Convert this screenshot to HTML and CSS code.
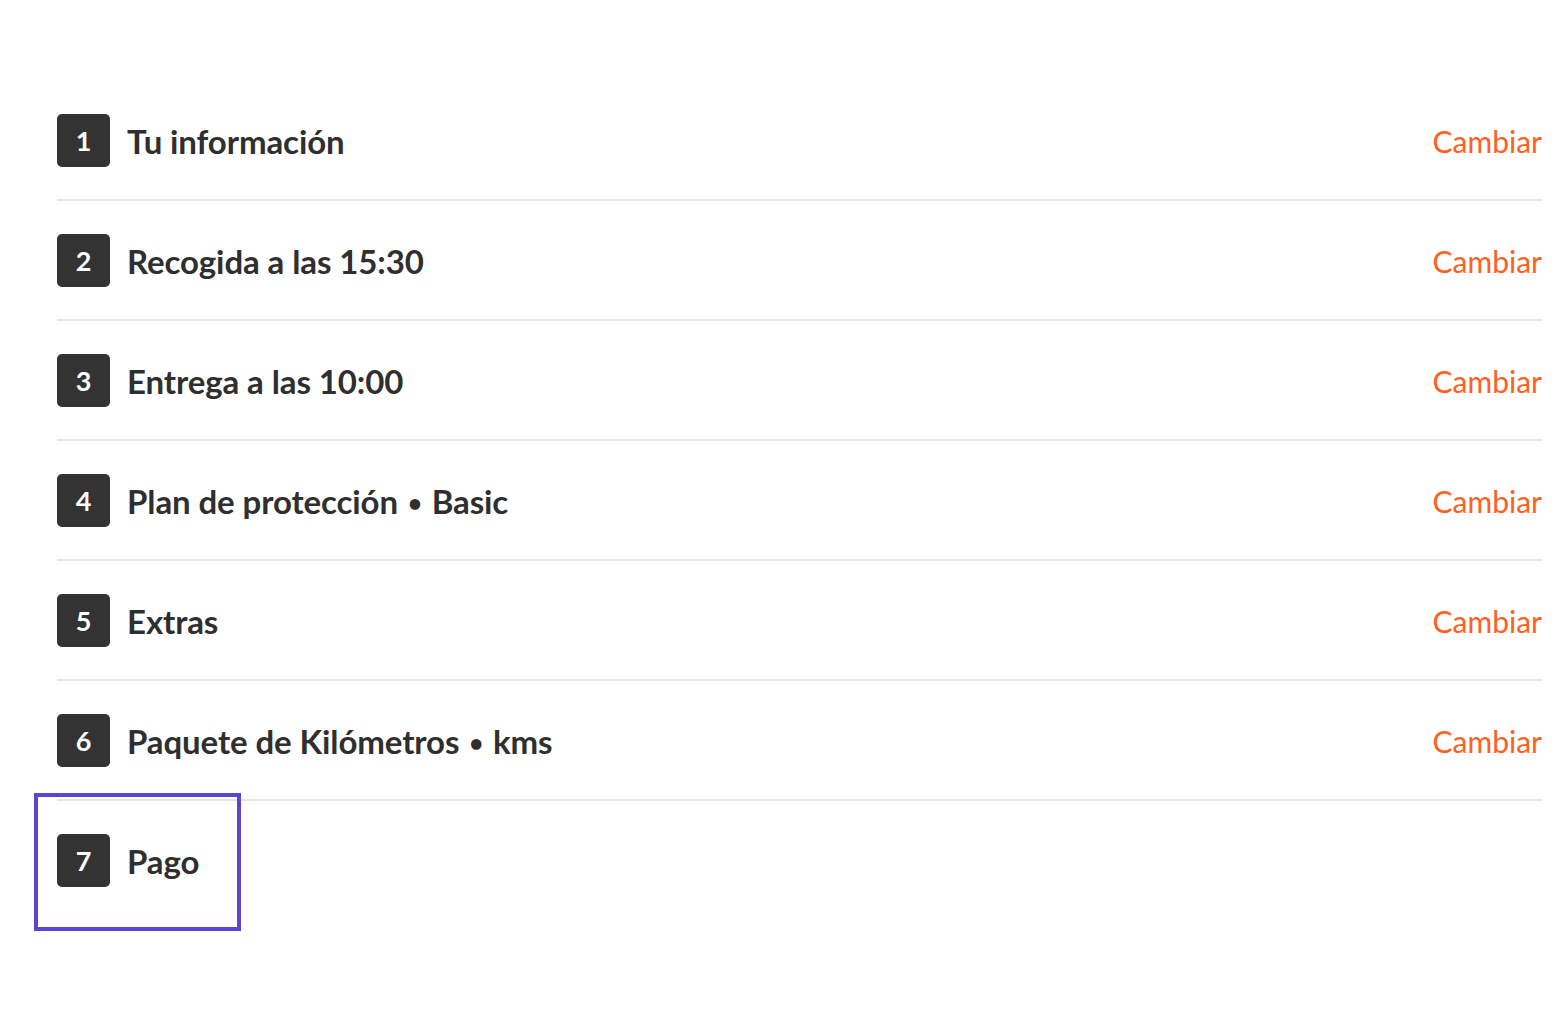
FILE: index.html
```
<!DOCTYPE html>
<html lang="es">
<head>
    <meta charset="UTF-8">
    <meta name="viewport" content="width=device-width, initial-scale=1.0">
    <title>Resumen de la reserva</title>
    <link rel="stylesheet" href="styles.css">
</head>
<body>
    <div class="page">
        <ul class="steps">
            <li class="step">
                <span class="step-number">1</span>
                <span class="step-title">Tu información</span>
                <a class="step-change" href="#">Cambiar</a>
            </li>
            <li class="step">
                <span class="step-number">2</span>
                <span class="step-title">Recogida a las 15:30</span>
                <a class="step-change" href="#">Cambiar</a>
            </li>
            <li class="step">
                <span class="step-number">3</span>
                <span class="step-title">Entrega a las 10:00</span>
                <a class="step-change" href="#">Cambiar</a>
            </li>
            <li class="step">
                <span class="step-number">4</span>
                <span class="step-title">Plan de protección <span class="sep">•</span> Basic</span>
                <a class="step-change" href="#">Cambiar</a>
            </li>
            <li class="step">
                <span class="step-number">5</span>
                <span class="step-title">Extras</span>
                <a class="step-change" href="#">Cambiar</a>
            </li>
            <li class="step">
                <span class="step-number">6</span>
                <span class="step-title">Paquete de Kilómetros <span class="sep">•</span> kms</span>
                <a class="step-change" href="#">Cambiar</a>
            </li>
            <li class="step step-current">
                <span class="step-number">7</span>
                <span class="step-title">Pago</span>
            </li>
        </ul>

        <!-- marco de selección sobre el paso activo -->
        <div class="highlight"></div>
    </div>
</body>
</html>
```

FILE: styles.css
```
:root {
    --badge-color: #333333;
    --text-color: #2f2f2f;
    --link-color: #ff5f1f;
    --line-color: #e5e5e5;
    --highlight-color: #5a45d6;
}

body {
    font-family: 'Lato', 'Noto Sans', sans-serif;
    margin: 0;
    background: white;
    color: var(--text-color);
}

.page {
    position: relative;
    min-height: 100vh;
    box-sizing: border-box;
    padding: 81px 14px 0 57px;
}

.steps {
    list-style: none;
    margin: 0;
    padding: 0;
}

.step {
    display: flex;
    align-items: center;
    height: 53px;
    padding: 33px 0 32px;
    border-bottom: 2px solid var(--line-color);
}

.step-current {
    border-bottom: none;
}

.step-number {
    flex: none;
    width: 53px;
    height: 53px;
    border-radius: 5px;
    background: var(--badge-color);
    color: white;
    display: flex;
    align-items: center;
    justify-content: center;
    font-size: 27px;
    font-weight: 700;
}

.step-title {
    margin-left: 17px;
    font-size: 33px;
    font-weight: 700;
    letter-spacing: -0.1px;
}

.sep {
    font-size: 24px;
    vertical-align: 2px;
    margin: 0 2px;
}

.step-change {
    margin-left: auto;
    color: var(--link-color);
    text-decoration: none;
    font-size: 30px;
}

.step-change:hover {
    text-decoration: underline;
}

.highlight {
    position: absolute;
    left: 34px;
    top: 793px;
    width: 207px;
    height: 138px;
    box-sizing: border-box;
    border: 4px solid var(--highlight-color);
    pointer-events: none;
}
```
